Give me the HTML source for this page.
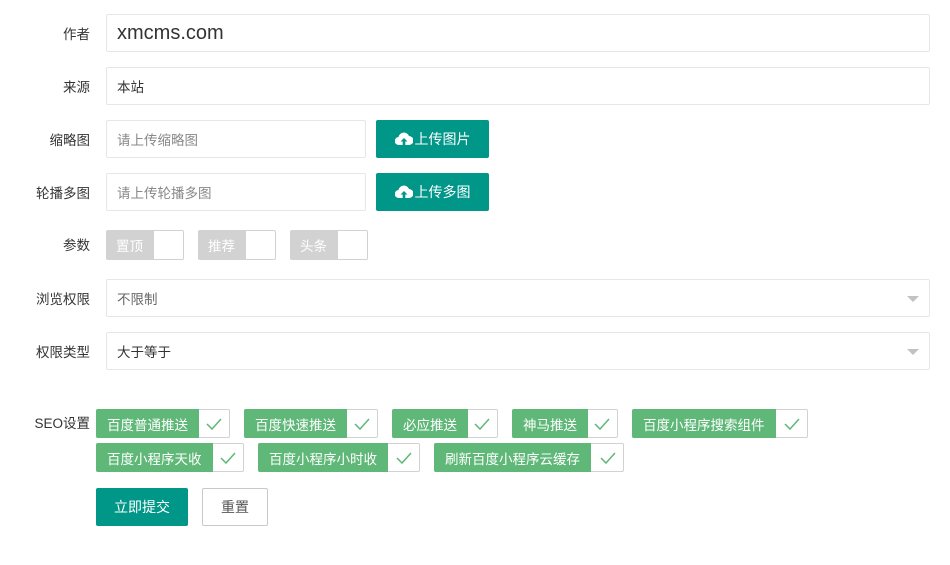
<!DOCTYPE html>
<html><head><meta charset="utf-8"><style>
*{box-sizing:border-box;margin:0;padding:0}
body{width:950px;height:565px;background:#fff;font-family:"Liberation Sans","Noto Sans CJK SC",sans-serif;font-size:14px;color:#333;position:relative;overflow:hidden}
.a{position:absolute}
.lbl{position:absolute;right:860px;width:90px;text-align:right;font-size:13.5px;color:#333;line-height:16px}
.in{position:absolute;border:1px solid #e6e6e6;border-radius:2px;background:#fff;padding-left:10px;display:flex;align-items:center;font-size:13.5px}
.ph{color:#888}
.btn{position:absolute;background:#009688;color:#fff;border-radius:2px;display:flex;align-items:center;justify-content:center;font-size:14px}
.sw{position:absolute;height:30px;border:1px solid #d2d2d2;border-radius:2px;background:#fff;width:78px}
.sw span{position:absolute;left:0;top:0;bottom:0;width:47px;background:#d2d2d2;color:#fff;font-size:13.5px;display:flex;align-items:center;padding-left:9px}
.cb{position:absolute;height:29px;border:1px solid #d2d2d2;border-radius:2px;background:#fff}
.cb span{position:absolute;left:-1px;top:-1px;bottom:-1px;background:#5fb878;color:#fff;font-size:13.5px;display:flex;align-items:center;padding:0 11px;border-radius:2px 0 0 2px}
.cb svg{position:absolute;right:7px;top:7px}
.tri{position:absolute;right:10px;top:16px;width:0;height:0;border-left:6px solid transparent;border-right:6px solid transparent;border-top:6px solid #c2c2c2}
</style></head><body>
<div class="lbl" style="top:27px">作者</div>
<div class="in" style="left:106px;top:14px;width:824px;height:38px;font-size:20px;color:#333">xmcms.com</div>
<div class="lbl" style="top:80px">来源</div>
<div class="in" style="left:106px;top:67px;width:824px;height:38px">本站</div>
<div class="lbl" style="top:133px">缩略图</div>
<div class="in ph" style="left:106px;top:120px;width:260px;height:38px">请上传缩略图</div>
<div class="btn" style="left:376px;top:120px;width:113px;height:38px"><svg width="18" height="14" viewBox="0 0 18 14" style="margin-right:2px"><path d="M4 13a4 4 0 0 1-.5-8A5.5 5.5 0 0 1 14 4a4.5 4.5 0 0 1 0 9z" fill="#fff"/><path d="M9 6l-3.5 3.5h2.2V13h2.6V9.5h2.2z" fill="#009688"/></svg>上传图片</div>
<div class="lbl" style="top:186px">轮播多图</div>
<div class="in ph" style="left:106px;top:173px;width:260px;height:38px">请上传轮播多图</div>
<div class="btn" style="left:376px;top:173px;width:113px;height:38px"><svg width="18" height="14" viewBox="0 0 18 14" style="margin-right:2px"><path d="M4 13a4 4 0 0 1-.5-8A5.5 5.5 0 0 1 14 4a4.5 4.5 0 0 1 0 9z" fill="#fff"/><path d="M9 6l-3.5 3.5h2.2V13h2.6V9.5h2.2z" fill="#009688"/></svg>上传多图</div>
<div class="lbl" style="top:238px">参数</div>
<div class="sw" style="left:106px;top:230px"><span>置顶</span></div>
<div class="sw" style="left:198px;top:230px"><span>推荐</span></div>
<div class="sw" style="left:290px;top:230px"><span>头条</span></div>
<div class="lbl" style="top:292px">浏览权限</div>
<div class="in" style="left:106px;top:279px;width:824px;height:38px;color:#666">不限制<div class="tri"></div></div>
<div class="lbl" style="top:345px">权限类型</div>
<div class="in" style="left:106px;top:332px;width:824px;height:38px">大于等于<div class="tri"></div></div>
<div class="lbl" style="top:416px">SEO设置</div>
<div class="cb" style="left:96px;top:409px;width:134px"><span>百度普通推送</span><svg width="16" height="14"><path d="M1 7l5 5L15 2" fill="none" stroke="#5fb878" stroke-width="1.5"/></svg></div>
<div class="cb" style="left:244px;top:409px;width:134px"><span>百度快速推送</span><svg width="16" height="14"><path d="M1 7l5 5L15 2" fill="none" stroke="#5fb878" stroke-width="1.5"/></svg></div>
<div class="cb" style="left:392px;top:409px;width:106px"><span>必应推送</span><svg width="16" height="14"><path d="M1 7l5 5L15 2" fill="none" stroke="#5fb878" stroke-width="1.5"/></svg></div>
<div class="cb" style="left:512px;top:409px;width:106px"><span>神马推送</span><svg width="16" height="14"><path d="M1 7l5 5L15 2" fill="none" stroke="#5fb878" stroke-width="1.5"/></svg></div>
<div class="cb" style="left:632px;top:409px;width:176px"><span>百度小程序搜索组件</span><svg width="16" height="14"><path d="M1 7l5 5L15 2" fill="none" stroke="#5fb878" stroke-width="1.5"/></svg></div>
<div class="cb" style="left:96px;top:443px;width:148px"><span>百度小程序天收</span><svg width="16" height="14"><path d="M1 7l5 5L15 2" fill="none" stroke="#5fb878" stroke-width="1.5"/></svg></div>
<div class="cb" style="left:258px;top:443px;width:162px"><span>百度小程序小时收</span><svg width="16" height="14"><path d="M1 7l5 5L15 2" fill="none" stroke="#5fb878" stroke-width="1.5"/></svg></div>
<div class="cb" style="left:434px;top:443px;width:190px"><span>刷新百度小程序云缓存</span><svg width="16" height="14"><path d="M1 7l5 5L15 2" fill="none" stroke="#5fb878" stroke-width="1.5"/></svg></div>
<div class="btn" style="left:96px;top:488px;width:92px;height:38px">立即提交</div>
<div class="a" style="left:202px;top:488px;width:66px;height:38px;border:1px solid #c9c9c9;border-radius:2px;display:flex;align-items:center;justify-content:center;color:#555">重置</div>
</body></html>
